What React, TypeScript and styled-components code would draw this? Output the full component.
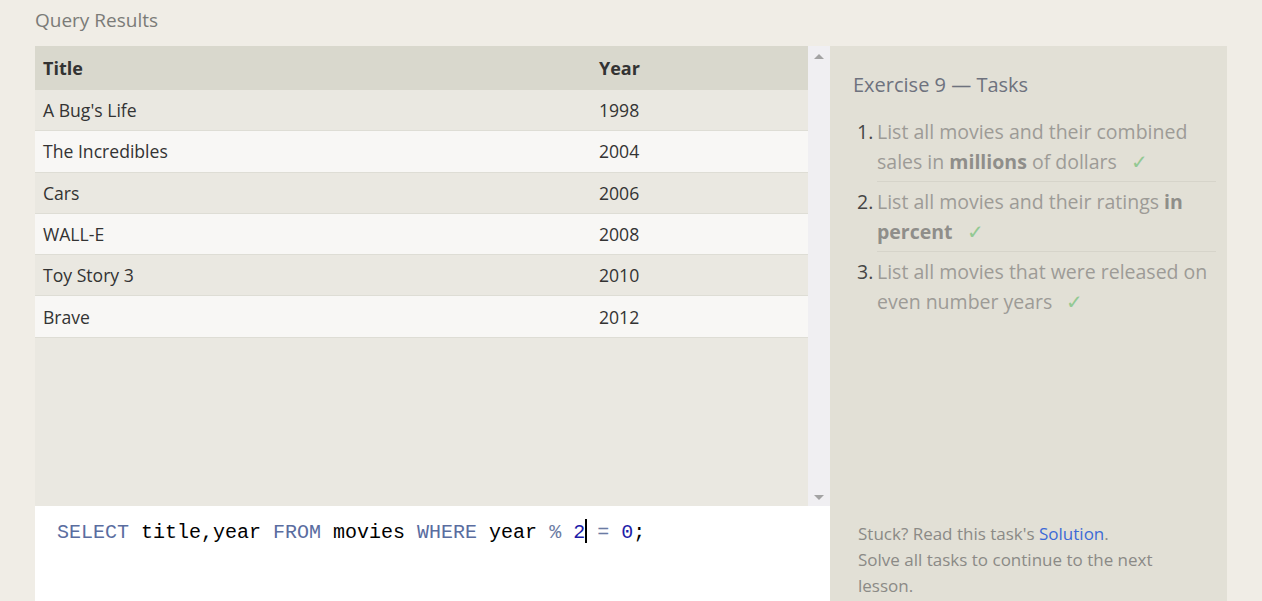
import React from "react";
import styled, { createGlobalStyle } from "styled-components";

const Global = createGlobalStyle`
  html, body { margin: 0; padding: 0; background: #f0ede6; }
  body { font-family: "Open Sans", "Noto Sans", sans-serif; overflow: hidden; }
`;

const Page = styled.div`
  width: 1262px;
  height: 601px;
  padding-left: 35px;
  box-sizing: border-box;
  display: flex;
  flex-direction: column;
`;

const Heading = styled.h2`
  margin: 0;
  height: 46px;
  box-sizing: border-box;
  padding-top: 5px;
  font-size: 19px;
  font-weight: 400;
  color: #7b7b78;
  line-height: 30px;
`;

const Columns = styled.div`
  display: flex;
  flex: 1;
  min-height: 0;
`;

const LeftCol = styled.div`
  width: 795px;
  display: flex;
  flex-direction: column;
`;

const ResultsBox = styled.div`
  height: 460px;
  display: flex;
  background: #eae8e1;
`;

const TableArea = styled.div`
  flex: 1;
`;

const Table = styled.table`
  width: 100%;
  border-collapse: collapse;
  font-size: 17.6px;
  color: #333;
`;

const HeadCell = styled.th<{ $w?: number }>`
  text-align: left;
  background: #d9d8cd;
  height: 44px;
  padding: 0 8px;
  font-weight: 700;
  font-size: 18px;
  ${(p) => (p.$w ? `width: ${p.$w}px;` : "")}
`;

const Row = styled.tr<{ $alt: boolean }>`
  background: ${(p) => (p.$alt ? "#f8f7f5" : "#eae8e1")};
  border-bottom: 1px solid #deddd5;
`;

const Cell = styled.td`
  height: 40.3px;
  padding: 0 8px;
  font-weight: 400;
`;

const Scrollbar = styled.div`
  width: 22px;
  background: #f0eff2;
  display: flex;
  flex-direction: column;
  justify-content: space-between;
  align-items: center;
  padding: 8px 0 6px;
  box-sizing: border-box;
`;

const Arrow = styled.div<{ $down?: boolean }>`
  width: 0;
  height: 0;
  border-left: 5px solid transparent;
  border-right: 5px solid transparent;
  ${(p) =>
    p.$down
      ? "border-top: 5px solid #a3a3a3;"
      : "border-bottom: 5px solid #a3a3a3;"}
`;

const Editor = styled.div`
  flex: 1;
  background: #ffffff;
  padding: 13px 0 0 22px;
  font-family: "Liberation Mono", "DejaVu Sans Mono", monospace;
  font-size: 20px;
  line-height: 26px;
  color: #000;
  white-space: pre;
`;

const Kw = styled.span`
  color: #5a6d9f;
`;
const Op = styled.span`
  color: #6b7ba3;
`;
const Num = styled.span`
  color: #1d1da8;
`;
const Caret = styled.span`
  display: inline-block;
  width: 2px;
  height: 24px;
  background: #000;
  vertical-align: -5px;
  margin: 0 -2px 0 0;
`;

const RightPanel = styled.div`
  width: 397px;
  background: #e2e0d6;
  display: flex;
  flex-direction: column;
  justify-content: space-between;
  padding: 24px 11px 0 23px;
  box-sizing: border-box;
`;

const PanelTitle = styled.h3`
  margin: 0 0 12px;
  font-size: 20px;
  font-weight: 400;
  color: #6e727e;
  line-height: 30px;
`;

const TaskList = styled.ol`
  margin: 0;
  padding: 0 0 0 24px;
  list-style: none;
  counter-reset: task;
`;

const Task = styled.li<{ $last?: boolean }>`
  counter-increment: task;
  position: relative;
  font-size: 19.5px;
  line-height: 29.5px;
  color: #9d9b96;
  padding: 5px 0;
  border-bottom: ${(p) => (p.$last ? "none" : "1px solid #d6d4ca")};
  &::before {
    content: counter(task) ".";
    position: absolute;
    left: -20px;
    color: #454545;
  }
  b {
    color: #8f8e8a;
    font-weight: 700;
  }
`;

const Check = styled.span`
  color: #93c993;
  padding-left: 14px;
`;

const Footer = styled.div`
  font-size: 17px;
  line-height: 26px;
  color: #8b8a86;
  padding: 0 60px 0 5px;
  margin-bottom: 2px;
`;

const SolutionLink = styled.a`
  color: #3d6ad6;
  text-decoration: none;
`;

const rows = [
  ["A Bug's Life", "1998"],
  ["The Incredibles", "2004"],
  ["Cars", "2006"],
  ["WALL-E", "2008"],
  ["Toy Story 3", "2010"],
  ["Brave", "2012"],
];

export default function App() {
  return (
    <>
      <Global />
      <Page>
        <Heading>Query Results</Heading>
        <Columns>
          <LeftCol>
            <ResultsBox>
              <TableArea>
                <Table>
                  <thead>
                    <tr>
                      <HeadCell $w={540}>Title</HeadCell>
                      <HeadCell>Year</HeadCell>
                    </tr>
                  </thead>
                  <tbody>
                    {rows.map((r, i) => (
                      <Row key={r[0]} $alt={i % 2 === 1}>
                        <Cell>{r[0]}</Cell>
                        <Cell>{r[1]}</Cell>
                      </Row>
                    ))}
                  </tbody>
                </Table>
              </TableArea>
              <Scrollbar>
                <Arrow />
                <Arrow $down />
              </Scrollbar>
            </ResultsBox>
            <Editor>
              <Kw>SELECT</Kw> title,year <Kw>FROM</Kw> movies <Kw>WHERE</Kw> year{" "}
              <Op>%</Op> <Num>2</Num>
              <Caret /> <Op>=</Op> <Num>0</Num>;
            </Editor>
          </LeftCol>
          <RightPanel>
            <div>
              <PanelTitle>Exercise 9 — Tasks</PanelTitle>
              <TaskList>
                <Task>
                  List all movies and their combined sales in <b>millions</b> of
                  dollars<Check>✓</Check>
                </Task>
                <Task>
                  List all movies and their ratings <b>in percent</b>
                  <Check>✓</Check>
                </Task>
                <Task $last>
                  List all movies that were released on even number years
                  <Check>✓</Check>
                </Task>
              </TaskList>
            </div>
            <Footer>
              Stuck? Read this task's <SolutionLink href="#">Solution</SolutionLink>.
              <br />
              Solve all tasks to continue to the next lesson.
            </Footer>
          </RightPanel>
        </Columns>
      </Page>
    </>
  );
}
